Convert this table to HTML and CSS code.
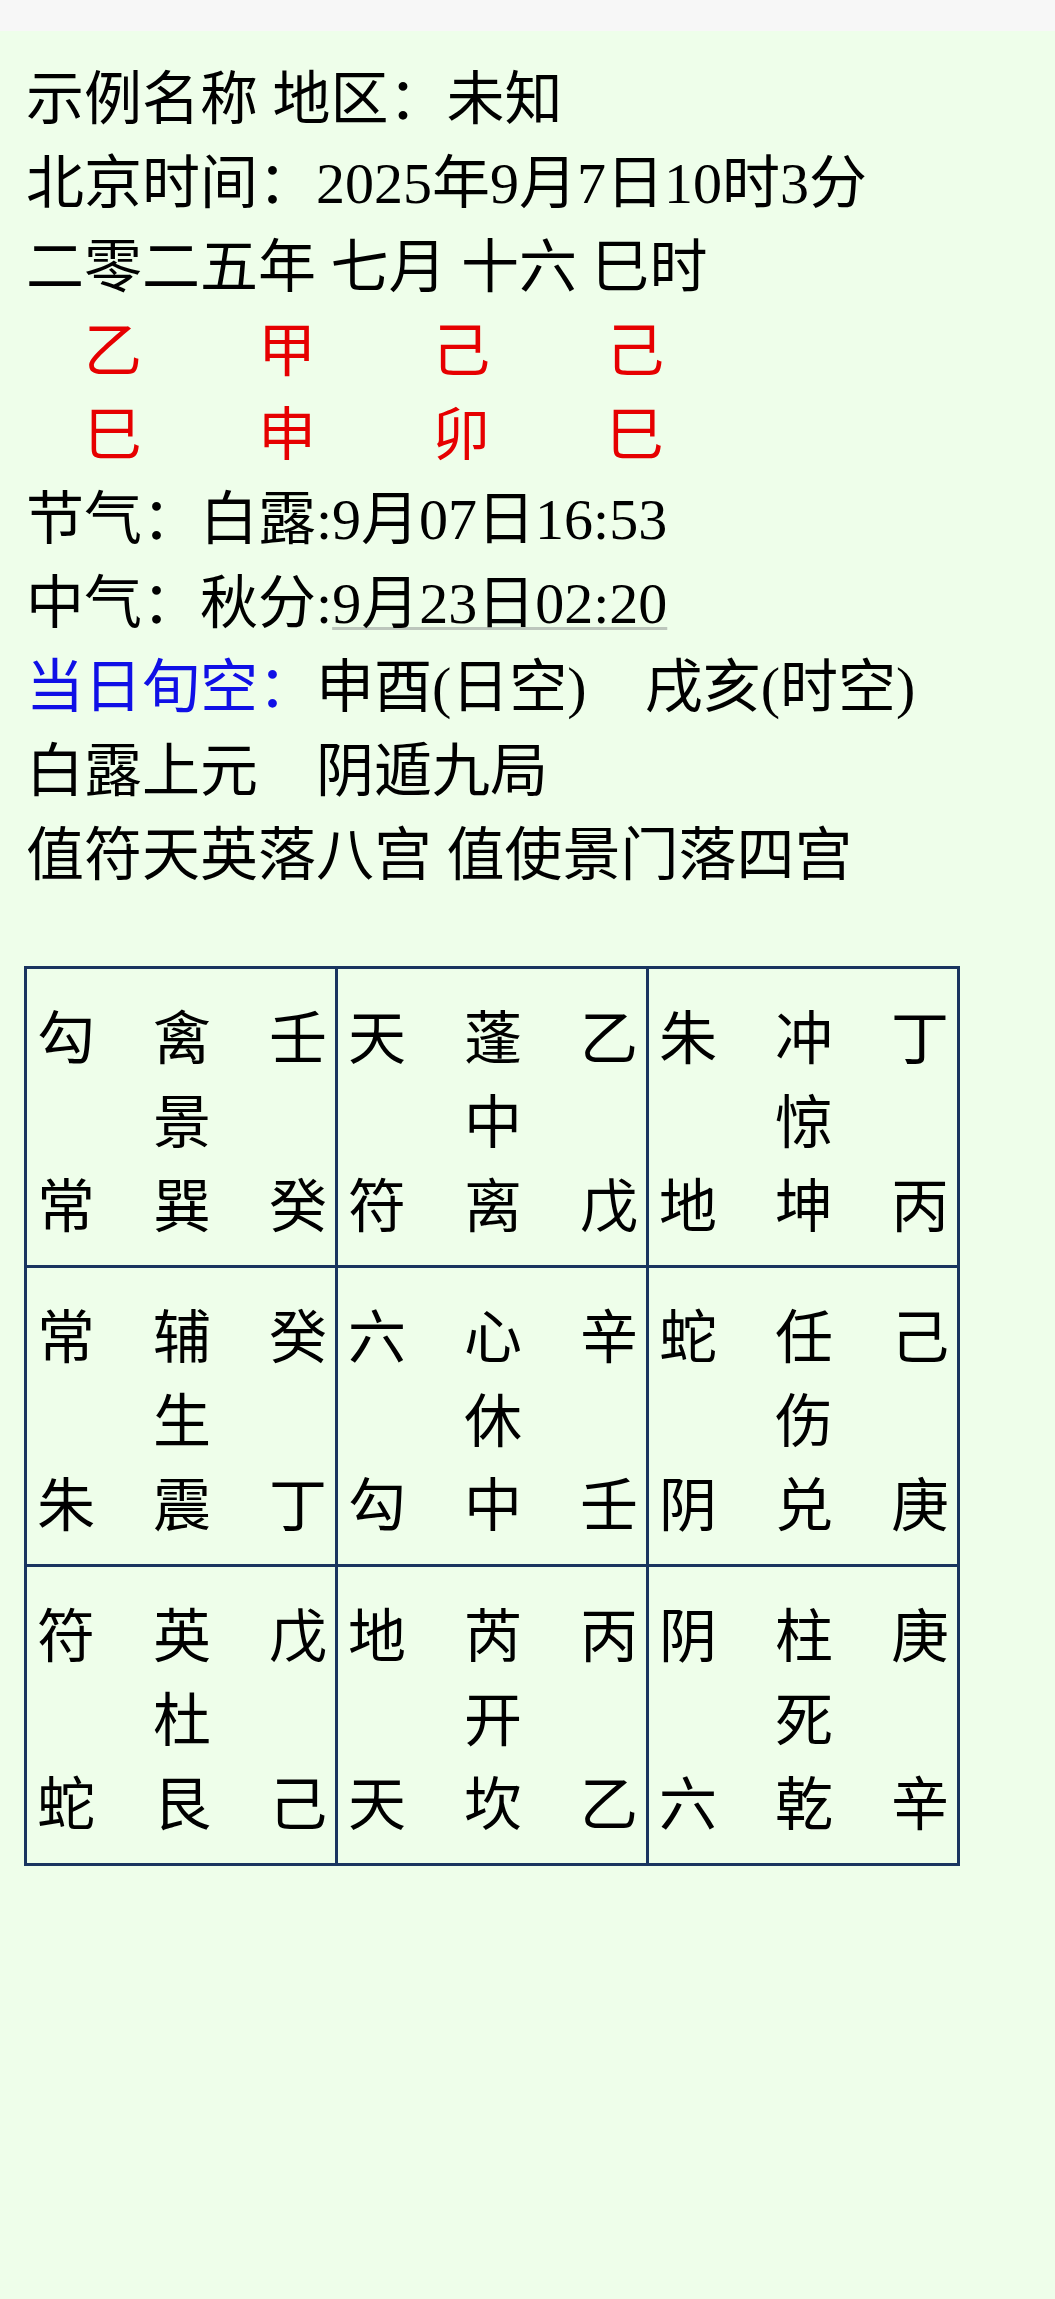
FILE: index.html
```html
<!DOCTYPE html>
<html lang="zh-CN">
<head>
<meta charset="utf-8">
<title>示例名称</title>
<link rel="stylesheet" href="styles.css">
</head>
<body>
<div class="topbar"></div>
<main class="chart">
  <p class="line">示例名称 地区：未知</p>
  <p class="line">北京时间：2025年9月7日10时3分</p>
  <p class="line">二零二五年 七月 十六 巳时</p>
  <div class="pillars">
    <span>乙</span><span>甲</span><span>己</span><span>己</span>
    <span>巳</span><span>申</span><span>卯</span><span>巳</span>
  </div>
  <p class="line">节气：白露:9月07日16:53</p>
  <p class="line">中气：秋分:<span class="date-link">9月23日02:20</span></p>
  <p class="line"><span class="label-blue">当日旬空：</span>申酉(日空)　戌亥(时空)</p>
  <p class="line">白露上元　阴遁九局</p>
  <p class="line">值符天英落八宫 值使景门落四宫</p>

  <div class="palaces">
    <div class="palace"><span>勾</span><span>禽</span><span>壬</span><span></span><span>景</span><span></span><span>常</span><span>巽</span><span>癸</span></div>
    <div class="palace"><span>天</span><span>蓬</span><span>乙</span><span></span><span>中</span><span></span><span>符</span><span>离</span><span>戊</span></div>
    <div class="palace"><span>朱</span><span>冲</span><span>丁</span><span></span><span>惊</span><span></span><span>地</span><span>坤</span><span>丙</span></div>
    <div class="palace"><span>常</span><span>辅</span><span>癸</span><span></span><span>生</span><span></span><span>朱</span><span>震</span><span>丁</span></div>
    <div class="palace"><span>六</span><span>心</span><span>辛</span><span></span><span>休</span><span></span><span>勾</span><span>中</span><span>壬</span></div>
    <div class="palace"><span>蛇</span><span>任</span><span>己</span><span></span><span>伤</span><span></span><span>阴</span><span>兑</span><span>庚</span></div>
    <div class="palace"><span>符</span><span>英</span><span>戊</span><span></span><span>杜</span><span></span><span>蛇</span><span>艮</span><span>己</span></div>
    <div class="palace"><span>地</span><span>芮</span><span>丙</span><span></span><span>开</span><span></span><span>天</span><span>坎</span><span>乙</span></div>
    <div class="palace"><span>阴</span><span>柱</span><span>庚</span><span></span><span>死</span><span></span><span>六</span><span>乾</span><span>辛</span></div>
  </div>
</main>
</body>
</html>
```

FILE: styles.css
```css
html {
  background: #eefeea;
}

body {
  margin: 0;
  min-height: 2299px;
  background: #eefeea;
  color: #000;
  font-family: "Liberation Serif", "Noto Sans CJK SC", serif;
  font-size: 58px;
  line-height: 84px;
}

.topbar {
  height: 31px;
  background: #f7f7f7;
}

.chart {
  padding: 27px 0 0 26px;
}

.line {
  margin: 0;
  white-space: pre;
}

.pillars {
  display: grid;
  grid-template-columns: repeat(4, 1em);
  grid-auto-rows: 84px;
  column-gap: 2em;
  padding-left: 1em;
  color: #e60000;
}

.label-blue {
  color: #1010e6;
}

.date-link {
  text-decoration: underline;
  text-decoration-color: #bcc6bc;
  text-decoration-thickness: 3px;
  text-underline-offset: 4px;
}

.palaces {
  display: grid;
  grid-template-columns: repeat(3, auto);
  width: max-content;
  gap: 3px;
  padding: 3px;
  margin: 68px 0 0 -2px;
  background: #1a3560;
}

.palace {
  display: grid;
  grid-template-columns: repeat(3, 1em);
  grid-auto-rows: 84px;
  column-gap: 1em;
  padding: 23px 8px 21px 10px;
  background: #eefeea;
  font-family: "Noto Sans CJK SC", sans-serif;
}
```
